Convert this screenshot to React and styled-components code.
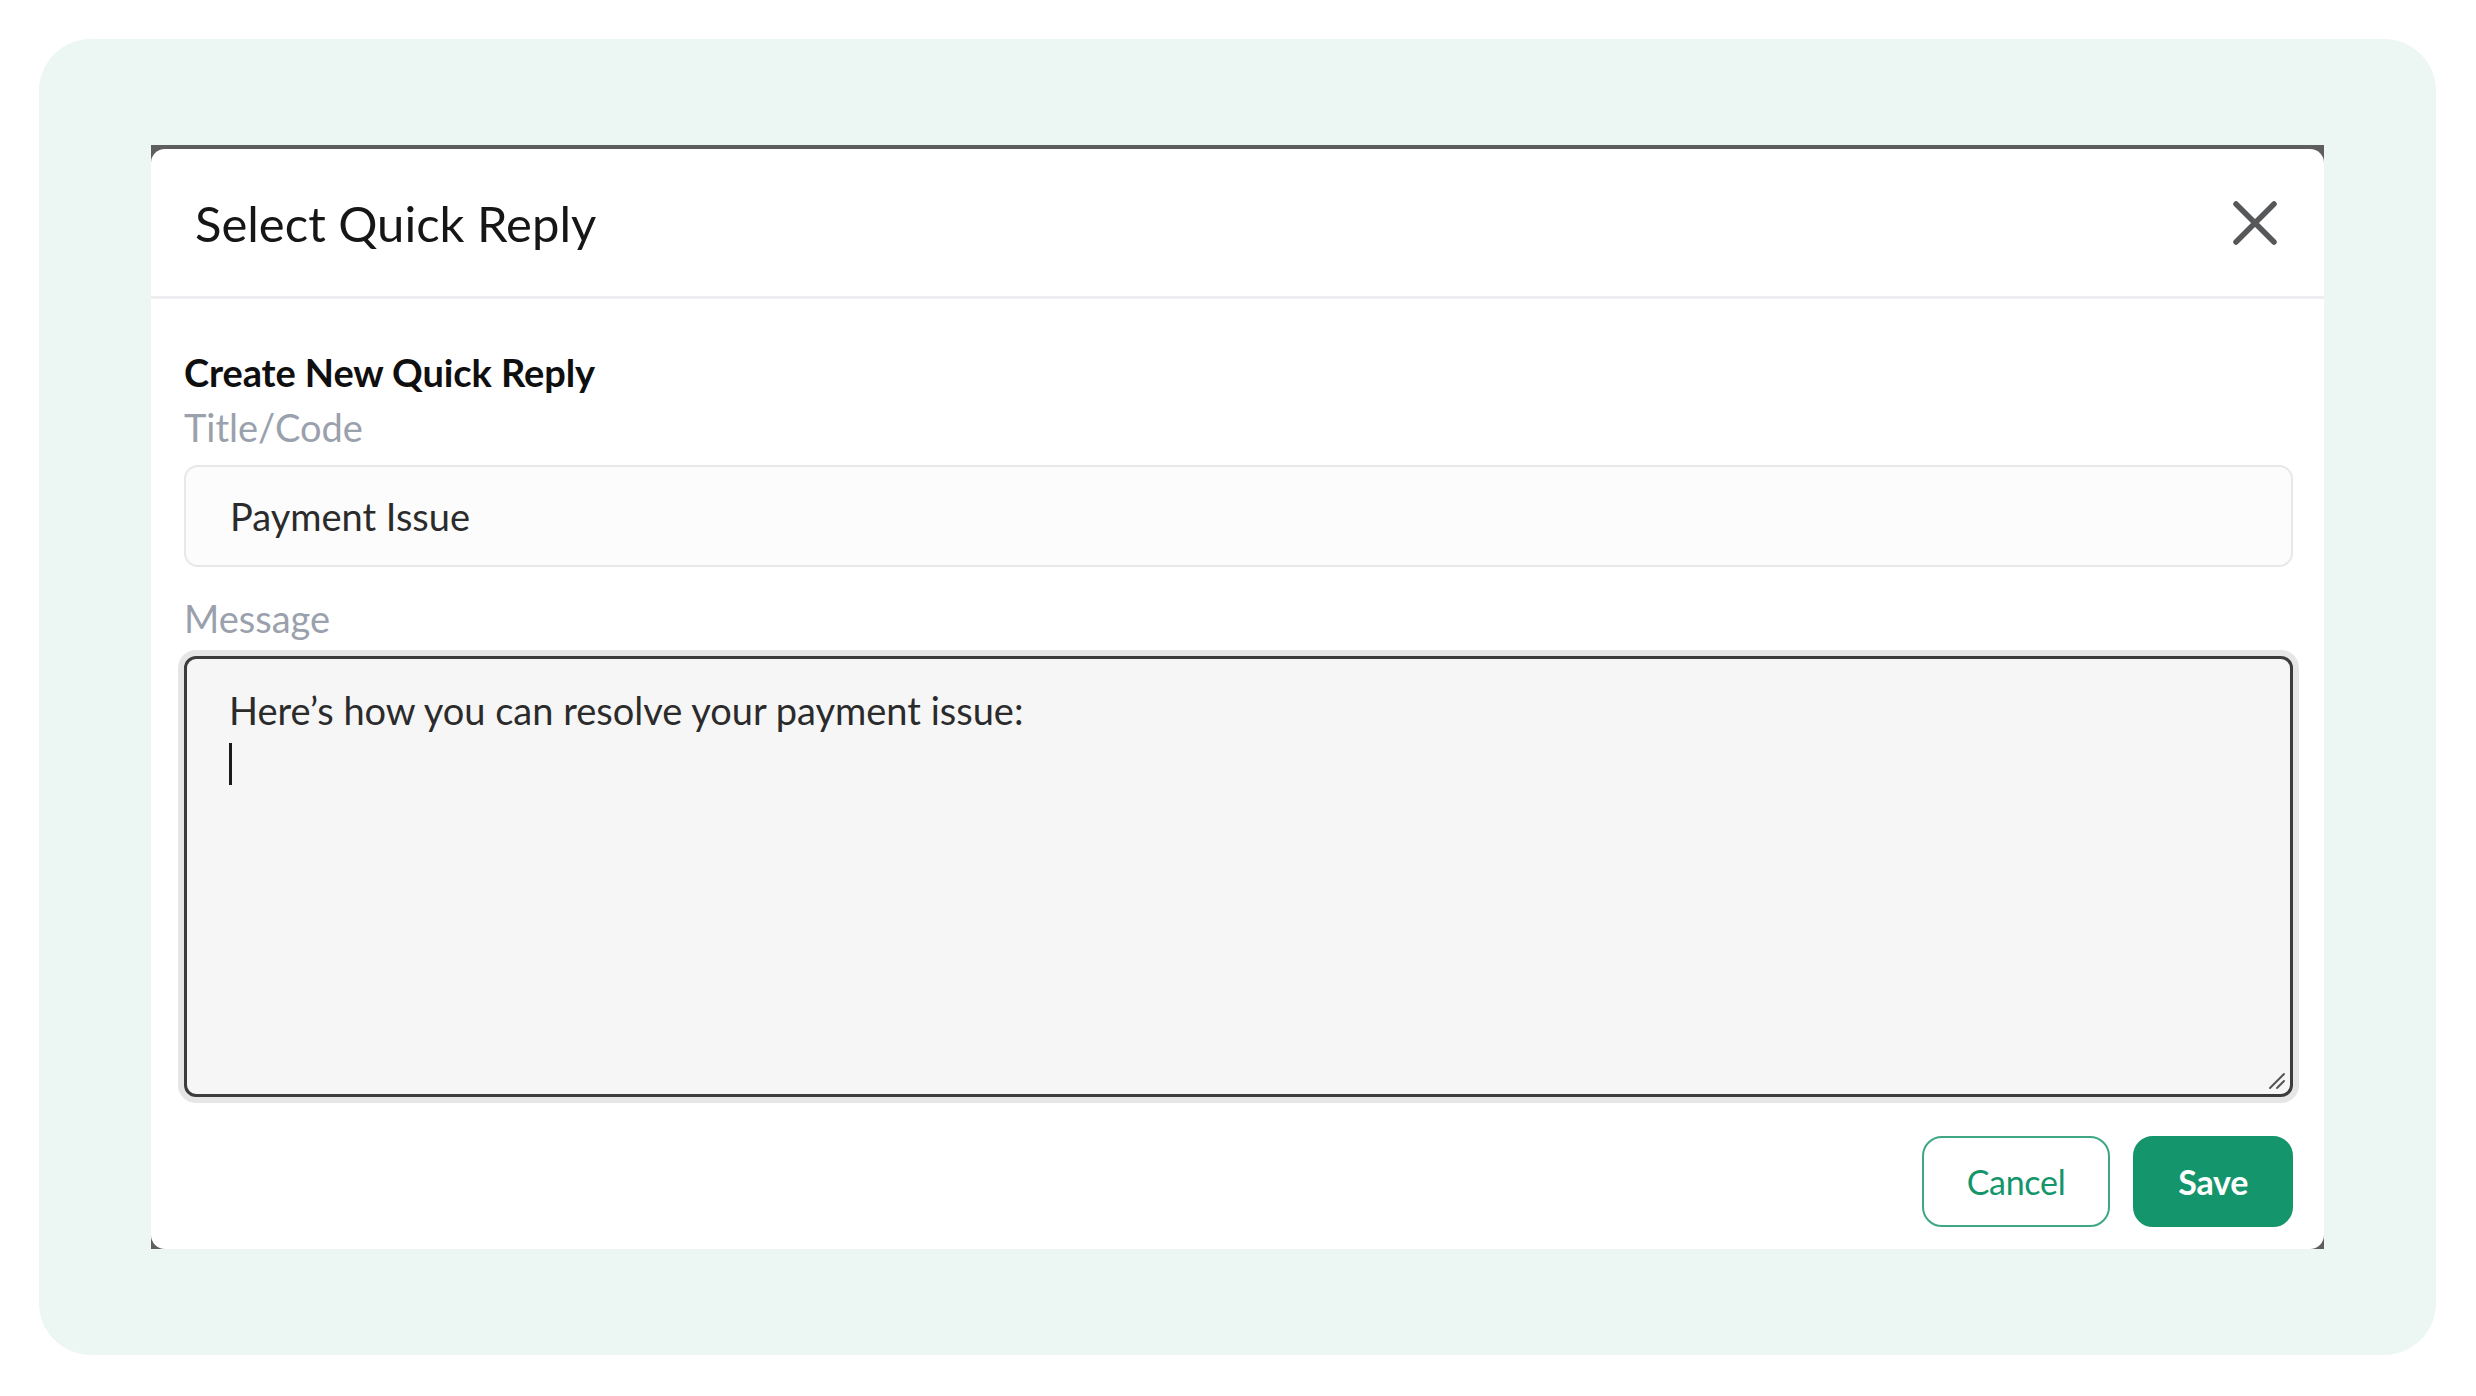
import React from "react";
import styled, { createGlobalStyle } from "styled-components";

const GlobalStyle = createGlobalStyle`
  html, body {
    margin: 0;
    padding: 0;
    background: #ffffff;
  }
  * {
    box-sizing: border-box;
  }
`;

const Page = styled.div`
  width: 2476px;
  height: 1396px;
  padding: 39px 40px 41px 39px;
  background: #ffffff;
  font-family: "Lato", "Liberation Sans", sans-serif;
`;

const Backdrop = styled.div`
  height: 100%;
  background: #ecf6f2;
  border-radius: 52px;
  display: flex;
  align-items: center;
  justify-content: center;
  padding: 0 112px;
`;

const Frame = styled.div`
  width: 100%;
  background: #5e5e5e;
  padding-top: 4px;
`;

const Modal = styled.div`
  background: #ffffff;
  border-radius: 14px;
  display: flex;
  flex-direction: column;
`;

const Header = styled.div`
  height: 150px;
  display: flex;
  align-items: center;
  justify-content: space-between;
  padding: 0 47px 0 44px;
  border-bottom: 3px solid #eeeef2;
`;

const Title = styled.h2`
  margin: 0;
  font-size: 49px;
  font-weight: 400;
  color: #161616;
`;

const CloseButton = styled.button`
  border: none;
  background: transparent;
  padding: 0;
  width: 44px;
  height: 44px;
  display: flex;
  align-items: center;
  justify-content: center;
  cursor: pointer;
`;

const Body = styled.div`
  padding: 50px 31px 22px 33px;
  display: flex;
  flex-direction: column;
`;

const SectionTitle = styled.h3`
  margin: 0;
  font-size: 38px;
  line-height: 46px;
  font-weight: 700;
  color: #0f0f0f;
  letter-spacing: -0.1px;
`;

const Label = styled.label`
  display: block;
  font-size: 38px;
  line-height: 44px;
  color: #9aa1ad;
  margin-top: ${(p) => p.$top || 0}px;
  margin-bottom: 16px;
`;

const TextInput = styled.input`
  width: 100%;
  height: 102px;
  border: 2px solid #e8e8ea;
  border-radius: 14px;
  background: #fcfcfc;
  padding: 0 44px;
  font-family: "Lato", "Liberation Sans", sans-serif;
  font-size: 38px;
  color: #2b2b2b;
  outline: none;
`;

const MessageBox = styled.div`
  position: relative;
  height: 441px;
  border: 3px solid #3c3c3c;
  border-radius: 12px;
  background: #f6f6f6;
  box-shadow: 0 0 0 6px #e6e6e6;
  padding: 24px 42px;
  font-size: 38px;
  line-height: 54px;
  color: #2b2b2b;
`;

const Line = styled.div`
  min-height: 54px;
`;

const Caret = styled.span`
  display: inline-block;
  width: 3px;
  height: 42px;
  background: #1a1a1a;
  vertical-align: middle;
  transform: translateY(-5px);
`;

const Grip = styled.svg`
  position: absolute;
  right: 4px;
  bottom: 4px;
`;

const Footer = styled.div`
  display: flex;
  justify-content: flex-end;
  gap: 23px;
  margin-top: 39px;
`;

const Button = styled.button`
  height: 91px;
  padding: 0 ${(p) => (p.$primary ? 43 : 43)}px;
  border-radius: 20px;
  border: 2px solid ${(p) => (p.$primary ? "#15956b" : "#3ea883")};
  background: ${(p) => (p.$primary ? "#15956b" : "#ffffff")};
  color: ${(p) => (p.$primary ? "#ffffff" : "#15956b")};
  font-family: "Lato", "Liberation Sans", sans-serif;
  font-size: 34px;
  font-weight: ${(p) => (p.$primary ? 700 : 400)};
  letter-spacing: -0.3px;
  cursor: pointer;
`;

function CloseIcon() {
  return (
    <svg width="44" height="44" viewBox="0 0 44 44">
      <path
        d="M3 3 L41 41 M41 3 L3 41"
        stroke="#555759"
        strokeWidth="5.5"
        strokeLinecap="round"
        fill="none"
      />
    </svg>
  );
}

export default function App() {
  return (
    <>
      <GlobalStyle />
      <Page>
        <Backdrop>
          <Frame>
            <Modal>
              <Header>
                <Title>Select Quick Reply</Title>
                <CloseButton aria-label="Close">
                  <CloseIcon />
                </CloseButton>
              </Header>
              <Body>
                <SectionTitle>Create New Quick Reply</SectionTitle>
                <Label $top={10}>Title/Code</Label>
                <TextInput value="Payment Issue" readOnly />
                <Label $top={29}>Message</Label>
                <MessageBox>
                  <Line>Here’s how you can resolve your payment issue:</Line>
                  <Line>
                    <Caret />
                  </Line>
                  <Grip width="20" height="20" viewBox="0 0 20 20">
                    <path
                      d="M4 18 L18 4 M11 18 L18 11"
                      stroke="#555"
                      strokeWidth="2"
                      strokeLinecap="round"
                    />
                  </Grip>
                </MessageBox>
                <Footer>
                  <Button>Cancel</Button>
                  <Button $primary>Save</Button>
                </Footer>
              </Body>
            </Modal>
          </Frame>
        </Backdrop>
      </Page>
    </>
  );
}
